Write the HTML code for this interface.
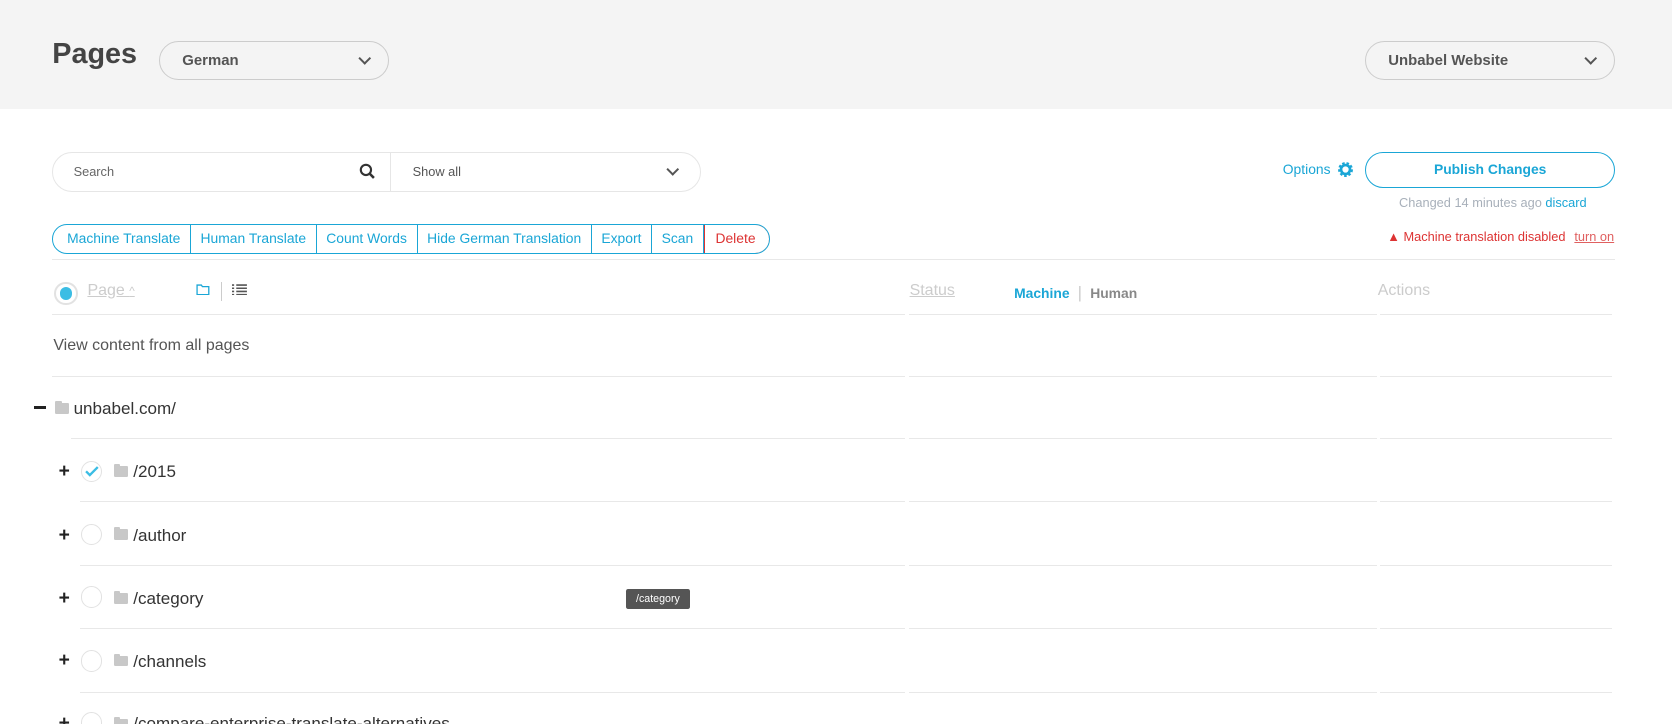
<!DOCTYPE html>
<html><head><meta charset="utf-8"><style>
html,body{margin:0;padding:0;background:#fff;overflow:hidden}
body{zoom:1.06633;width:1568px;height:679px;position:relative;font-family:"Liberation Sans",sans-serif;color:#333}
.a{position:absolute}
.hdr{left:0;top:0;width:1568px;height:102px;background:#f4f4f4}
.sel{border:1px solid #ccc;border-radius:20px;height:34px;box-sizing:border-box;font-size:14px;font-weight:bold;color:#555;line-height:34px;padding-left:21px}
.chev{position:absolute;right:18px;top:12px;width:7px;height:7px;border-right:2px solid #555;border-bottom:2px solid #555;transform:rotate(45deg)}
.blue{color:#1aa6d6}
.btns{left:49px;top:210px;height:28px;display:flex;border:1px solid #1aa6d6;border-radius:14px;box-sizing:border-box;overflow:hidden}
.btns span{font-size:13px;color:#1aa6d6;padding:0 9px;line-height:26px;border-right:1px solid #1aa6d6}
.btns span:first-child{padding-left:13px}
.btns span.del{color:#d33;border:1px solid #d33;border-radius:0 14px 14px 0;margin:-1px -1px -1px 0;line-height:26px;padding:0 13px 0 10px}
.hl{height:1px;background:#e8e8e8}
.plus{position:absolute;font-size:18px;font-weight:bold;color:#222}
.circ{position:absolute;width:20px;height:20px;border:1.5px solid #e2e2e2;border-radius:50%;box-sizing:border-box}
.fold{position:absolute;width:13px;height:10px;background:#c8c8c8;border-radius:1px}
.fold:before{content:"";position:absolute;left:0;top:-2px;width:6px;height:3px;background:#c8c8c8;border-radius:1px 1px 0 0}
.gap{position:absolute;width:3px;height:2px;background:#fff}
</style></head><body>
<div class="a hdr"></div>
<div class="a" style="left:49px;top:36px;font-size:27px;font-weight:bold;color:#444">Pages</div>
<div class="a sel" style="left:149px;top:38px;width:216px;height:37px;line-height:36px">German<i class="chev"></i></div>
<div class="a sel" style="left:1280px;top:38px;width:235px;height:37px;line-height:36px">Unbabel Website<i class="chev"></i></div>

<div class="a" style="left:49px;top:143px;width:608px;height:37px;border:1px solid #e6e6e6;border-radius:19px;box-sizing:border-box"></div>
<div class="a" style="left:366px;top:143px;width:1px;height:37px;background:#e6e6e6"></div>
<div class="a" style="left:69px;top:154px;font-size:12px;color:#666">Search</div>
<svg class="a" style="left:337px;top:153px" width="16" height="16" viewBox="0 0 16 16"><circle cx="6.5" cy="6.5" r="4.8" fill="none" stroke="#333" stroke-width="2"/><path d="M10 10l4 4" stroke="#333" stroke-width="2.4"/></svg>
<div class="a" style="left:387px;top:154px;font-size:12px;color:#555">Show all</div>
<i class="a chev" style="left:626px;top:155px;right:auto"></i>

<div class="a blue" style="left:1203px;top:151px;font-size:13px">Options</div>
<svg class="a" style="left:1254px;top:151px" width="16" height="16" viewBox="0 0 16 16"><circle cx="8" cy="8" r="5.5" fill="none" stroke="#1aa6d6" stroke-width="3" stroke-dasharray="2.2 1.6"/><circle cx="8" cy="8" r="4.2" fill="none" stroke="#1aa6d6" stroke-width="2.5"/></svg>
<div class="a" style="left:1280px;top:143px;width:235px;height:33px;border:1.5px solid #1aa6d6;border-radius:17px;box-sizing:border-box;text-align:center;line-height:31px;font-size:13px;font-weight:bold;color:#1aa6d6">Publish Changes</div>
<div class="a" style="left:1312px;top:183px;font-size:12px;color:#a8b0ba">Changed 14 minutes ago <span class="blue">discard</span></div>
<div class="a" style="left:1301px;top:215px;font-size:12px;color:#d33">▲ Machine translation disabled <span style="margin-left:5px;text-decoration:underline;color:#e06060">turn on</span></div>

<div class="a btns"><span>Machine Translate</span><span>Human Translate</span><span>Count Words</span><span>Hide German Translation</span><span>Export</span><span>Scan</span><span class="del">Delete</span></div>

<div class="a hl" style="left:49px;top:243px;width:1466px"></div>
<div class="a circ" style="left:51px;top:264px;width:22px;height:22px;border-width:2px"></div>
<div class="a" style="left:56px;top:269px;width:12px;height:12px;border-radius:50%;background:#3bbde4"></div>
<div class="a" style="left:82px;top:264px;font-size:15px;color:#ccc;text-decoration:underline">Page <span style="text-decoration:none;font-size:11px">^</span></div>
<svg class="a" style="left:184px;top:266px" width="13" height="11" viewBox="0 0 13 11"><path d="M1 1h4l1 1.5h6v7.5H1z" fill="none" stroke="#1aa6d6" stroke-width="1.2"/></svg>
<div class="a" style="left:207px;top:264px;width:1px;height:18px;background:#ccc"></div>
<svg class="a" style="left:218px;top:266px" width="14" height="11" viewBox="0 0 14 11"><path d="M0 1h2M4 1h10M0 4h2M4 4h10M0 7h2M4 7h10M0 10h2M4 10h10" stroke="#555" stroke-width="1.5"/></svg>
<div class="a" style="left:853px;top:264px;font-size:15px;color:#ccc;text-decoration:underline">Status</div>
<div class="a" style="left:951px;top:265px;font-size:13px;font-weight:bold;color:#1aa6d6">Machine <span style="color:#ccc;font-weight:normal;margin:0 4px;font-size:16px">|</span> <span style="color:#888">Human</span></div>
<div class="a" style="left:1292px;top:264px;font-size:15px;color:#ccc">Actions</div>
<div class="a hl" style="left:49px;top:294px;width:1463px"></div>
<div class="a" style="left:50px;top:316px;font-size:15px;color:#555">View content from all pages</div>
<div class="a hl" style="left:49px;top:353px;width:1463px"></div>

<div class="a" style="left:32px;top:381px;width:11px;height:3px;background:#222"></div>
<div class="fold" style="left:52px;top:378px"></div>
<div class="a" style="left:69px;top:374px;font-size:16px">unbabel.com/</div>
<div class="a hl" style="left:67px;top:411px;width:1445px"></div>

<div class="a plus" style="left:55px;top:432px">+</div>
<div class="circ" style="left:76px;top:432px"></div>
<svg class="a" style="left:80px;top:437px" width="13" height="10" viewBox="0 0 13 10"><path d="M1 5l3.5 3.5L12 1" fill="none" stroke="#3bbde4" stroke-width="2.2"/></svg>
<div class="fold" style="left:107px;top:437px"></div>
<div class="a" style="left:125px;top:433px;font-size:16px">/2015</div>
<div class="a hl" style="left:75px;top:470px;width:1437px"></div>

<div class="a plus" style="left:55px;top:492px">+</div>
<div class="circ" style="left:76px;top:491px"></div>
<div class="fold" style="left:107px;top:496px"></div>
<div class="a" style="left:125px;top:493px;font-size:16px">/author</div>
<div class="a hl" style="left:75px;top:530px;width:1437px"></div>

<div class="a plus" style="left:55px;top:551px">+</div>
<div class="circ" style="left:76px;top:550px"></div>
<div class="fold" style="left:107px;top:556px"></div>
<div class="a" style="left:125px;top:552px;font-size:16px">/category</div>
<div class="a" style="left:587px;top:552px;width:60px;height:19px;background:#555;border-radius:2px;color:#fff;font-size:10px;line-height:19px;text-align:center">/category</div>
<div class="a hl" style="left:75px;top:589px;width:1437px"></div>

<div class="a plus" style="left:55px;top:610px">+</div>
<div class="circ" style="left:76px;top:610px"></div>
<div class="fold" style="left:107px;top:615px"></div>
<div class="a" style="left:125px;top:611px;font-size:16px">/channels</div>
<div class="a hl" style="left:75px;top:649px;width:1437px"></div>

<div class="a plus" style="left:55px;top:669px">+</div>
<div class="circ" style="left:76px;top:668px"></div>
<div class="fold" style="left:107px;top:674px"></div>
<div class="a" style="left:125px;top:670px;font-size:16px">/compare-enterprise-translate-alternatives</div>

<div class="gap" style="left:849px;top:294px"></div><div class="gap" style="left:1291px;top:294px"></div>
<div class="gap" style="left:849px;top:353px"></div><div class="gap" style="left:1291px;top:353px"></div>
<div class="gap" style="left:849px;top:411px"></div><div class="gap" style="left:1291px;top:411px"></div>
<div class="gap" style="left:849px;top:470px"></div><div class="gap" style="left:1291px;top:470px"></div>
<div class="gap" style="left:849px;top:530px"></div><div class="gap" style="left:1291px;top:530px"></div>
<div class="gap" style="left:849px;top:589px"></div><div class="gap" style="left:1291px;top:589px"></div>
<div class="gap" style="left:849px;top:649px"></div><div class="gap" style="left:1291px;top:649px"></div>
</body></html>
